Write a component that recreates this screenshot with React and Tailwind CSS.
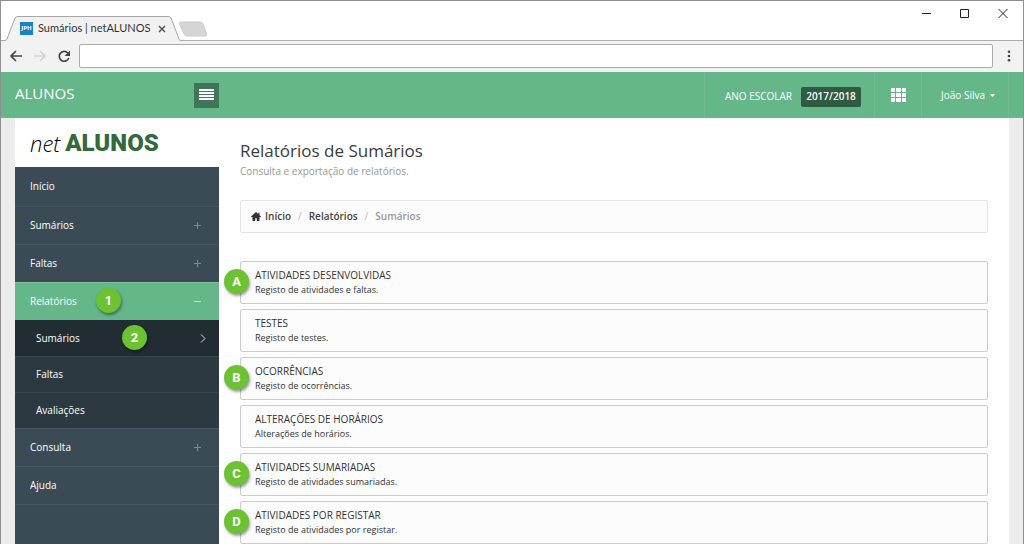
import { useState } from 'react'

const SUBMENU = ['Sumários', 'Faltas', 'Avaliações']

const REPORTS = [
  { title: 'ATIVIDADES DESENVOLVIDAS', text: 'Registo de atividades e faltas.', mark: 'A' },
  { title: 'TESTES', text: 'Registo de testes.' },
  { title: 'OCORRÊNCIAS', text: 'Registo de ocorrências.', mark: 'B' },
  { title: 'ALTERAÇÕES DE HORÁRIOS', text: 'Alterações de horários.' },
  { title: 'ATIVIDADES SUMARIADAS', text: 'Registo de atividades sumariadas.', mark: 'C' },
  { title: 'ATIVIDADES POR REGISTAR', text: 'Registo de atividades por registar.', mark: 'D' },
]

function Marker({ children, className }) {
  return (
    <span
      className={`absolute flex size-[25px] items-center justify-center rounded-full bg-[#6cc233] font-['Roboto',sans-serif] text-[13px] font-bold text-white shadow-[1px_2px_3px_rgba(0,0,0,0.4)] ${className}`}
    >
      {children}
    </span>
  )
}

function BrowserBar() {
  return (
    <div>
      {/* Tab strip */}
      <div className="flex h-10 items-end justify-between border-b border-[#acacac] bg-white">
        <div className="flex items-end">
          <div className="relative -mb-px ml-1 flex h-[25px] w-[176px] items-center">
            <svg className="absolute inset-0" width="176" height="25" viewBox="0 0 176 25" aria-hidden="true">
              <path d="M0 24.5 L2 23 L10 2 Q11 .5 13 .5 H163 Q165 .5 166 2 L174 23 L176 24.5 V25 H0 Z" fill="#f2f2f2" />
              <path d="M0 24.5 Q1.500 24.500 2 23 L10 2 Q11 .5 13 .5 H163 Q165 .5 166 2 L174 23 Q174.500 24.500 176 24.500" fill="none" stroke="#a6a6a6" />
            </svg>
            <div className="relative flex flex-1 items-center pr-[15px] pl-[15px]">
              <span className="flex size-[13px] items-center justify-center bg-[#1583c8] text-[6px] font-bold text-white">JPH</span>
              <span className="ml-[5px] flex-1 font-['Lato',sans-serif] text-[11px] whitespace-nowrap text-[#333]">Sumários | netALUNOS</span>
              <button type="button" aria-label="Fechar separador" className="text-[#555]">
                <svg width="8" height="8" viewBox="0 0 8 8" stroke="currentColor" strokeWidth="1.500" aria-hidden="true">
                  <path d="M1 1l6 6M7 1l-6 6" />
                </svg>
              </button>
            </div>
          </div>
          <button type="button" aria-label="Novo separador" className="mb-[3px] -ml-1">
            <svg width="32" height="16" viewBox="0 0 32 16" aria-hidden="true">
              <path d="M4 1H23Q25 1 26 3L29.500 13Q30 15 28 15H10Q8 15 7 13L2.500 3Q2 1 4 1Z" fill="#d5d5d5" stroke="#cbcbcb" />
            </svg>
          </button>
        </div>
        <div className="flex items-center gap-7 self-start pt-[7px] pr-[15px] text-[#222]">
          <button type="button" aria-label="Minimizar">
            <svg width="10" height="10" viewBox="0 0 10 10" stroke="currentColor" aria-hidden="true">
              <path d="M0 5.500h9" />
            </svg>
          </button>
          <button type="button" aria-label="Maximizar">
            <svg width="10" height="10" viewBox="0 0 10 10" fill="none" stroke="currentColor" aria-hidden="true">
              <path d="M.5 1.500h8v8h-8z" />
            </svg>
          </button>
          <button type="button" aria-label="Fechar">
            <svg width="10" height="10" viewBox="0 0 10 10" stroke="currentColor" aria-hidden="true">
              <path d="M.5 1l9 9M9.500 1l-9 9" />
            </svg>
          </button>
        </div>
      </div>

      {/* Address bar */}
      <div className="flex h-[31px] items-center bg-[#f2f2f2] pr-3 pb-px pl-[9px]">
        <div className="flex w-[69px] items-center gap-3">
          <button type="button" aria-label="Recuar" className="text-[#444]">
            <svg width="12" height="12" viewBox="0 0 12 12" fill="none" stroke="currentColor" strokeWidth="1.600" aria-hidden="true">
              <path d="M12 6H1M6 1L1 6l5 5" />
            </svg>
          </button>
          <button type="button" aria-label="Avançar" className="text-[#d2d2d2]">
            <svg width="12" height="12" viewBox="0 0 12 12" fill="none" stroke="currentColor" strokeWidth="1.600" aria-hidden="true">
              <path d="M0 6h11M6 1l5 5-5 5" />
            </svg>
          </button>
          <button type="button" aria-label="Recarregar" className="text-[#444]">
            <svg width="13" height="13" viewBox="0 0 13 13" fill="none" stroke="currentColor" strokeWidth="1.700" aria-hidden="true">
              <path d="M9.700 2.900A4.900 4.900 0 1 0 10.800 8" />
              <path d="M12 .6v5.400H6.600z" fill="currentColor" stroke="none" />
            </svg>
          </button>
        </div>
        <input
          type="text"
          aria-label="Endereço"
          className="h-6 min-w-0 flex-1 rounded-[2px] border border-[#ababab] bg-white px-2 text-xs outline-none"
        />
        <button type="button" aria-label="Menu" className="ml-[14px] text-[#444]">
          <svg width="4" height="12" viewBox="0 0 4 12" fill="currentColor" aria-hidden="true">
            <circle cx="2" cy="1.700" r="1.300" />
            <circle cx="2" cy="6" r="1.300" />
            <circle cx="2" cy="10.300" r="1.300" />
          </svg>
        </button>
      </div>
    </div>
  )
}

function Header() {
  return (
    <header className="flex h-[46px] bg-[#65b688] pr-[14px] text-white">
      <div className="flex w-[218px] items-center justify-between pl-[14px]">
        <span className="mb-1 text-[15px]">ALUNOS</span>
        <button type="button" aria-label="Mostrar menu" className="flex size-[25px] items-center justify-center bg-[#417557]">
          <svg width="15" height="12" viewBox="0 0 15 12" fill="#fff" aria-hidden="true">
            <path d="M0 0h15v2H0zM0 3h15v2H0zM0 6h15v2H0zM0 9h15v2H0z" />
          </svg>
        </button>
      </div>
      <div className="ml-auto flex items-stretch">
        <div className="flex items-center border-l border-[#70bb90] pt-[3px] pr-[13px] pl-5 text-[10px] font-medium">
          <span id="school-year">ANO ESCOLAR</span>
          <button
            type="button"
            aria-describedby="school-year"
            className="ml-[9px] h-5 w-[60px] rounded-[2px] bg-[#2f5b42] font-semibold"
          >
            2017/2018
          </button>
        </div>
        <button type="button" aria-label="Aplicações" className="flex w-[47px] items-center justify-center border-l border-[#70bb90]">
          <svg width="15" height="14" viewBox="0 0 15 14" fill="#fff" aria-hidden="true">
            <path d="M0 0h4v4H0zM5 0h5v4H5zM11 0h4v4h-4zM0 5h4v4H0zM5 5h5v4H5zM11 5h4v4h-4zM0 10h4v4H0zM5 10h5v4H5zM11 10h4v4h-4z" />
          </svg>
        </button>
        <button type="button" className="flex w-[88px] items-center justify-end border-x border-[#70bb90] pr-[13px] text-[10px] font-medium">
          João Silva
          <svg className="ml-[5px]" width="5" height="3" viewBox="0 0 5 3" fill="#fff" aria-hidden="true">
            <path d="M0 0h5L2.500 3z" />
          </svg>
        </button>
      </div>
    </header>
  )
}

function Sign({ open }) {
  return (
    <svg width="7" height="7" viewBox="0 0 7 7" stroke={open ? '#b9e0ca' : '#7c8991'} aria-hidden="true">
      <path d={open ? 'M0 3.500h7' : 'M0 3.500h7M3.500 0v7'} />
    </svg>
  )
}

const itemClass = 'flex h-[38px] w-full items-center justify-between border-t border-[#465661] pr-[18px] pl-[15px] text-left'

function Sidebar() {
  const [open, setOpen] = useState('Relatórios')
  const toggle = (name) => setOpen(open === name ? null : name)

  return (
    <aside className="flex w-[204px] shrink-0 flex-col">
      <div className="flex h-[49px] items-center gap-[5px] bg-white pl-[15px] leading-none">
        <span className="text-[22px] font-light text-black italic">net</span>
        <span className="font-['Roboto',sans-serif] text-2xl font-black text-[#33693b]">ALUNOS</span>
      </div>
      <nav className="flex-1 bg-[#3a4b55] text-[10px] font-medium text-white">
        <a href="#inicio" className="flex h-[39px] items-center pl-[15px]">Início</a>
        {['Sumários', 'Faltas'].map((name) => (
          <button key={name} type="button" className={itemClass}>
            {name}
            <Sign />
          </button>
        ))}
        <div className="relative">
          <button
            type="button"
            aria-expanded={open === 'Relatórios'}
            onClick={() => toggle('Relatórios')}
            className="flex h-[38px] w-full items-center justify-between border-t border-[#7bc299] bg-[#65b688] pr-[18px] pl-[15px] text-left"
          >
            Relatórios
            <Sign open={open === 'Relatórios'} />
          </button>
          <Marker className="top-[6px] left-[81px]">1</Marker>
        </div>
        {open === 'Relatórios' && (
          <ul className="font-normal">
            {SUBMENU.map((name, i) => (
              <li key={name} className="relative">
                <a
                  href={`#${name}`}
                  className={`flex h-9 items-center justify-between border-t pr-[13px] pl-[21px] ${
                    i === 0 ? 'border-[#222d33] bg-[#222d33]' : 'border-[#37444c] bg-[#2d3941]'
                  }`}
                >
                  {name}
                  {i === 0 && (
                    <svg width="6" height="9" viewBox="0 0 6 9" fill="none" stroke="#d8dde0" aria-hidden="true">
                      <path d="M1 .5l4 4-4 4" />
                    </svg>
                  )}
                </a>
                {i === 0 && <Marker className="top-[5px] left-[107px]">2</Marker>}
              </li>
            ))}
          </ul>
        )}
        <button type="button" className={itemClass}>
          Consulta
          <Sign />
        </button>
        <a href="#ajuda" className={itemClass}>Ajuda</a>
        <div className="border-t border-[#465661]" />
      </nav>
    </aside>
  )
}

export default function App() {
  return (
    <div className="flex min-h-screen flex-col border-x border-t border-[#8f8f8f] bg-[#ececec] font-['Open_Sans',sans-serif]">
      <BrowserBar />
      <Header />
      <div className="mx-[14px] flex flex-1 bg-white">
        <Sidebar />
        <main className="min-w-0 flex-1 px-[21px]">
          <h1 className="pt-[21px] text-[17px] leading-6 text-[#3c3c3c]">Relatórios de Sumários</h1>
          <p className="text-[10px] leading-4 text-[#999]">Consulta e exportação de relatórios.</p>

          <nav
            aria-label="Localização"
            className="mt-[21px] flex h-[33px] items-center rounded-[2px] border border-[#e4e4e4] bg-[#fcfcfc] px-[10px] text-[10px] font-semibold text-[#444]"
          >
            <svg width="10" height="9" viewBox="0 0 10 9" fill="#333" aria-hidden="true">
              <path d="M5 0L0 4.600l.6.600H1.500V9H4.200V6.200h1.600V9H8.500V5.200h.9l.6-.6L8.500 3.200V.7H7.200V2z" />
            </svg>
            <a href="#inicio" className="ml-1">Início</a>
            <span className="mx-[7px] font-normal text-[#bbb]">/</span>
            <a href="#relatorios">Relatórios</a>
            <span className="mx-[7px] font-normal text-[#bbb]">/</span>
            <span className="text-[#999]">Sumários</span>
          </nav>

          <ul className="mt-[28px] flex flex-col gap-[5px]">
            {REPORTS.map((report) => (
              <li key={report.title} className="relative">
                <a href="#relatorio" className="flex h-[43px] flex-col rounded-[2px] border border-[#ccc] bg-[#fcfcfc] px-[14px] pt-[5px] font-medium text-[#333]">
                  <span className="text-[10px] leading-4">{report.title}</span>
                  <span className="text-[9px] leading-[14px]">{report.text}</span>
                </a>
                {report.mark && <Marker className="top-2 -left-4">{report.mark}</Marker>}
              </li>
            ))}
          </ul>
        </main>
      </div>
    </div>
  )
}
